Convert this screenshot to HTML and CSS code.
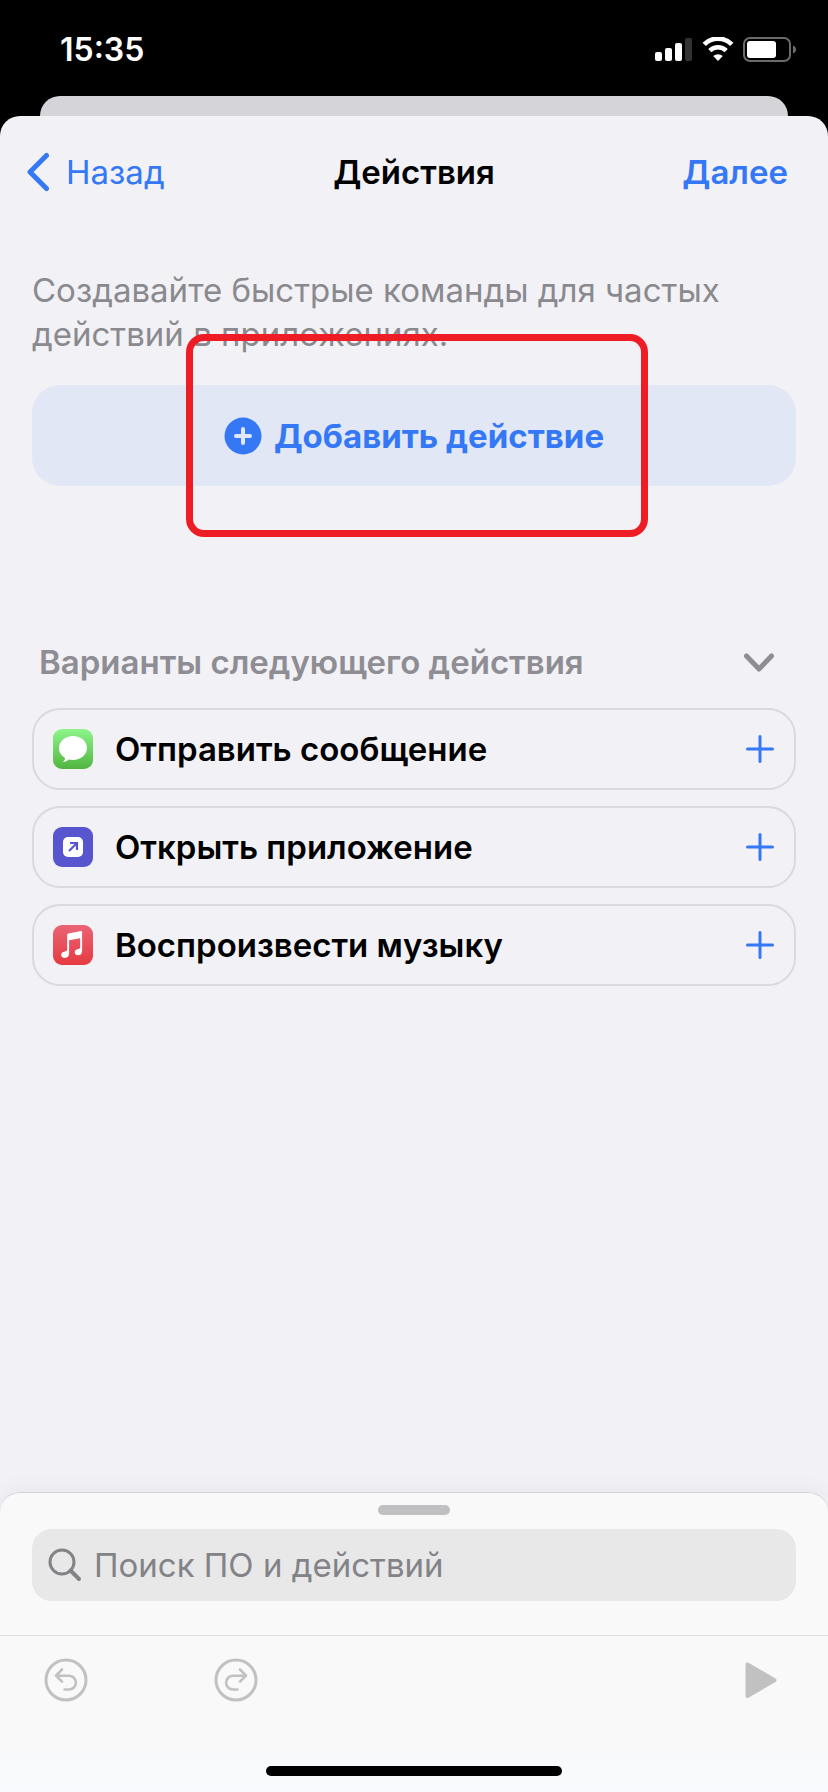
FILE: index.html
```html
<!DOCTYPE html>
<html lang="ru">
<head>
  <meta charset="UTF-8">
  <meta name="viewport" content="width=device-width, initial-scale=1.0">
  <title>Действия</title>
  <link rel="stylesheet" href="styles.css">
</head>
<body>
  <div class="status-bar">
    <time>15:35</time>
    <div class="status-icons">
      <svg width="38" height="26" viewBox="0 0 38 26" fill="#fff" aria-hidden="true">
        <rect x="0" y="15" width="7" height="9" rx="2"/>
        <rect x="10" y="11" width="7" height="13" rx="2"/>
        <rect x="20" y="6" width="7" height="18" rx="2"/>
        <rect x="30" y="1" width="7" height="23" rx="2" fill="#333"/>
      </svg>
      <svg width="32" height="26" viewBox="0 0 32 26" aria-hidden="true">
        <path d="M2.200 7.400a19.500 19.500 0 0 1 27.600 0" fill="none" stroke="#fff" stroke-width="4.800"/>
        <path d="M7.800 13.600a11.600 11.600 0 0 1 16.400 0" fill="none" stroke="#fff" stroke-width="4.400"/>
        <path d="M16 24l-4.800-4.900a7 7 0 0 1 9.600 0z" fill="#fff"/>
      </svg>
      <svg width="53" height="26" viewBox="0 0 53 26" aria-hidden="true">
        <rect x="1" y="1" width="46" height="23" rx="6" fill="none" stroke="#6b6b6b" stroke-width="2"/>
        <rect x="4" y="4" width="29" height="17" rx="3" fill="#fff"/>
        <path d="M50 8.500c4 1.200 4 6.800 0 8z" fill="#6b6b6b"/>
      </svg>
    </div>
  </div>

  <div class="sheet-behind"></div>

  <div class="sheet">
    <header class="nav">
      <a href="#" class="nav-back">
        <svg width="24" height="40" viewBox="0 0 24 40" aria-hidden="true">
          <path d="M20.500 3.500L4 20l16.500 16.500" fill="none" stroke="currentColor" stroke-width="5" stroke-linecap="round" stroke-linejoin="round"/>
        </svg>
        Назад
      </a>
      <h1>Действия</h1>
      <a href="#" class="nav-next">Далее</a>
    </header>

    <main>
      <p class="intro">Создавайте быстрые команды для частых действий в приложениях.</p>

      <div class="add">
        <button type="button" class="add-button">
          <svg width="38" height="38" viewBox="0 0 38 38" aria-hidden="true">
            <circle cx="19" cy="19" r="18.500" fill="currentColor"/>
            <path d="M19 12v14M12 19h14" stroke="#e1e7f5" stroke-width="4" stroke-linecap="round"/>
          </svg>
          Добавить действие
        </button>
        <div class="highlight"></div>
      </div>

      <section>
        <button type="button" class="section-toggle">
          Варианты следующего действия
          <svg width="30" height="20" viewBox="0 0 30 20" aria-hidden="true">
            <path d="M2.500 4L15 17 27.500 4" fill="none" stroke="currentColor" stroke-width="5" stroke-linecap="round" stroke-linejoin="round"/>
          </svg>
        </button>

        <div class="suggestions">
          <button type="button" class="suggestion">
            <svg width="40" height="40" viewBox="0 0 40 40" aria-hidden="true">
              <defs>
                <linearGradient id="green" x1="0" y1="0" x2="0" y2="1">
                  <stop offset="0" stop-color="#8df58b"/>
                  <stop offset="1" stop-color="#52b541"/>
                </linearGradient>
              </defs>
              <rect width="40" height="40" rx="9" fill="url(#green)"/>
              <path d="M20 7c7.800 0 14 5.300 14 12s-6.200 12-14 12c-1.500 0-2.900-.2-4.200-.5-1.700 1.500-3.600 2.300-5.900 2.300 1.300-1 2-2.200 2.200-3.800C8.400 26.800 6 23.200 6 19 6 12.300 12.200 7 20 7z" fill="#fff"/>
            </svg>
            <span>Отправить сообщение</span>
            <svg width="28" height="28" viewBox="0 0 28 28" class="plus" aria-hidden="true">
              <path d="M14 1.500v25M1.500 14h25" stroke="currentColor" stroke-width="3" stroke-linecap="round"/>
            </svg>
          </button>

          <button type="button" class="suggestion">
            <svg width="40" height="40" viewBox="0 0 40 40" aria-hidden="true">
              <rect width="40" height="40" rx="9" fill="#5856ce"/>
              <rect x="10" y="10" width="20" height="20" rx="5" fill="#fff"/>
              <path d="M16 24l7.500-7.500M17 16h7v7" fill="none" stroke="#5856ce" stroke-width="2.200"/>
            </svg>
            <span>Открыть приложение</span>
            <svg width="28" height="28" viewBox="0 0 28 28" class="plus" aria-hidden="true">
              <path d="M14 1.500v25M1.500 14h25" stroke="currentColor" stroke-width="3" stroke-linecap="round"/>
            </svg>
          </button>

          <button type="button" class="suggestion">
            <svg width="40" height="40" viewBox="0 0 40 40" aria-hidden="true">
              <defs>
                <linearGradient id="red" x1="0" y1="0" x2="0" y2="1">
                  <stop offset="0" stop-color="#ea6475"/>
                  <stop offset="1" stop-color="#e63a42"/>
                </linearGradient>
              </defs>
              <rect width="40" height="40" rx="9" fill="url(#red)"/>
              <path d="M14.200 10c0-.8.400-1.200 1.100-1.400L28 6c.7-.1 1.100.2 1.100.9v19c0 2.600-1.500 4.300-4 4.300-2 0-3.400-1.100-3.400-2.900 0-2 1.500-2.900 3.500-3.300 1.400-.3 2-.8 2-2v-8.800L16.100 15.300v13.300c0 2.600-1.700 4.400-4.200 4.400-2.100 0-3.700-1.100-3.700-3 0-2 1.500-3 3.600-3.400 1.600-.3 2.400-.8 2.400-2z" fill="#fff"/>
            </svg>
            <span>Воспроизвести музыку</span>
            <svg width="28" height="28" viewBox="0 0 28 28" class="plus" aria-hidden="true">
              <path d="M14 1.500v25M1.500 14h25" stroke="currentColor" stroke-width="3" stroke-linecap="round"/>
            </svg>
          </button>
        </div>
      </section>
    </main>

    <footer class="drawer">
      <div class="grabber"></div>
      <label class="search">
        <svg width="34" height="34" viewBox="0 0 34 34" aria-hidden="true">
          <circle cx="14" cy="14" r="12" fill="none" stroke="currentColor" stroke-width="3"/>
          <path d="M22.500 22.500l8.500 8.500" stroke="currentColor" stroke-width="4" stroke-linecap="round"/>
        </svg>
        <input type="search" placeholder="Поиск ПО и действий" aria-label="Поиск ПО и действий">
      </label>

      <div class="toolbar">
        <button type="button" aria-label="Отменить">
          <svg width="44" height="44" viewBox="0 0 44 44" fill="none" stroke="currentColor" stroke-width="3" stroke-linecap="round" stroke-linejoin="round" aria-hidden="true">
            <circle cx="22" cy="22" r="20"/>
            <path d="M18 11.500L12 17.700l6 6M12 17.700h13a6.900 6.900 0 0 1 0 13.800h-4.500" stroke-width="2.600"/>
          </svg>
        </button>
        <button type="button" aria-label="Повторить">
          <svg width="44" height="44" viewBox="0 0 44 44" fill="none" stroke="currentColor" stroke-width="3" stroke-linecap="round" stroke-linejoin="round" aria-hidden="true">
            <circle cx="22" cy="22" r="20"/>
            <path d="M26 11.500l6 6.200-6 6M32 17.700H19a6.900 6.900 0 0 0 0 13.800h4.500" stroke-width="2.600"/>
          </svg>
        </button>
        <button type="button" class="play" aria-label="Запустить">
          <svg width="34" height="38" viewBox="0 0 34 38" aria-hidden="true">
            <path d="M3.500 3.500v31.500L30.500 19.200z" fill="currentColor" stroke="currentColor" stroke-width="4" stroke-linejoin="round"/>
          </svg>
        </button>
      </div>
      <div class="home-indicator"></div>
    </footer>
  </div>
</body>
</html>
```

FILE: styles.css
```css
* {
  box-sizing: border-box;
}
body {
  margin: 0;
  min-height: 100vh;
  display: flex;
  flex-direction: column;
  background-color: #000;
  color: #000;
  font-family: Inter, 'Noto Sans', sans-serif;
  font-size: 33px;
  line-height: 44px;
}
svg {
  display: block;
  flex-shrink: 0;
}
button {
  padding: 0;
  border: none;
  background: none;
  font: inherit;
  cursor: pointer;
}
a {
  color: #3478f6;
  text-decoration: none;
}

.status-bar {
  display: flex;
  align-items: center;
  justify-content: space-between;
  height: 96px;
  padding: 4px 32px 0 60px;
  color: white;
  font-size: 32px;
  font-weight: 600;
}
.status-icons {
  display: flex;
  align-items: center;
  gap: 9px;
}

.sheet-behind {
  height: 40px;
  margin: 0 40px -20px;
  border-radius: 20px 20px 0 0;
  background-color: #d5d4d9;
}
.sheet {
  flex: 1;
  display: flex;
  flex-direction: column;
  border-radius: 20px 20px 0 0;
  background-color: #f2f1f6;
}

.nav {
  display: grid;
  grid-template-columns: 1fr auto 1fr;
  align-items: center;
  height: 112px;
  padding: 0 40px 0 26px;
}
.nav h1 {
  margin: 0 0 0 14px;
  font-size: 33px;
  font-weight: 600;
}
.nav-back {
  display: flex;
  align-items: center;
  gap: 16px;
}
.nav-next {
  font-weight: 600;
  text-align: right;
}

main {
  flex: 1;
  padding: 40px 32px;
}
.intro {
  margin: 0 0 29px;
  color: #8a8a8e;
}

.add {
  position: relative;
  margin-bottom: 154px;
}
.add-button {
  display: flex;
  align-items: center;
  justify-content: center;
  gap: 12px;
  width: 100%;
  height: 101px;
  border-radius: 28px;
  background-color: #e1e7f5;
  color: #3478f6;
  font-weight: 700;
}
/* red frame around the button label */
.highlight {
  position: absolute;
  top: -51px;
  bottom: -51px;
  left: 50%;
  width: 462px;
  margin-left: -228px;
  border: 7px solid #ee1c24;
  border-radius: 18px;
  pointer-events: none;
}

.section-toggle {
  display: flex;
  align-items: center;
  justify-content: space-between;
  width: 100%;
  margin-bottom: 24px;
  padding: 0 22px 0 7px;
  color: #8e8d93;
  font-weight: 600;
}
.suggestions {
  display: flex;
  flex-direction: column;
  gap: 16px;
}
.suggestion {
  display: flex;
  align-items: center;
  gap: 22px;
  height: 82px;
  padding: 0 20px 0 19px;
  border: 2px solid #d9d9de;
  border-radius: 28px;
  color: #000;
  font-weight: 600;
}
.plus {
  margin-left: auto;
  color: #3478f6;
}

.drawer {
  border-top: 1px solid #d3d3d9;
  border-radius: 20px 20px 0 0;
  background: linear-gradient(#f9f9f9 80%, #f8fafd);
  box-shadow: 0 0 24px rgba(0,0,0,0.06);
}
.grabber {
  width: 72px;
  height: 10px;
  margin: 12px auto 14px;
  border-radius: 5px;
  background-color: #c0c0c2;
}
.search {
  display: flex;
  align-items: center;
  gap: 12px;
  height: 72px;
  margin: 0 32px 34px;
  padding: 0 16px;
  border-radius: 20px;
  background-color: #e8e8e8;
  color: #838387;
}
.search input {
  flex: 1;
  min-width: 0;
  padding: 0;
  border: none;
  outline: none;
  background: none;
  color: #000;
  font: inherit;
}
.search input::placeholder {
  color: #838387;
  opacity: 1;
}
.toolbar {
  display: flex;
  align-items: center;
  gap: 126px;
  padding: 22px 50px 0 44px;
  border-top: 1px solid #dcdddf;
}
.toolbar button {
  color: #c1c1c1;
}
.toolbar .play {
  margin-left: auto;
}
.home-indicator {
  width: 296px;
  height: 10px;
  margin: 64px auto 16px;
  border-radius: 5px;
  background-color: #000;
}
```
